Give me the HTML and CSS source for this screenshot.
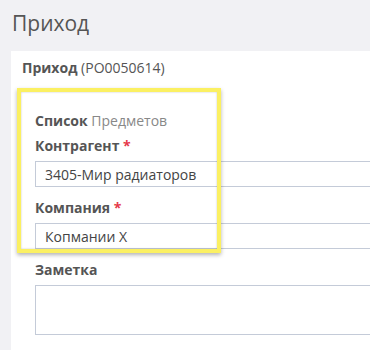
FILE: index.html
```html
<!DOCTYPE html>
<html lang="ru">
<head>
<meta charset="UTF-8" />
<meta name="viewport" content="width=device-width, initial-scale=1" />
<title>Приход</title>
<link rel="stylesheet" href="styles.css">
</head>
<body>
  <h1 class="page-title">Приход</h1>
  <div class="card">
    <div class="card-head"><b>Приход</b> (PO0050614)</div>
    <form class="form">
      <div class="section"><b>Список</b> <span>Предметов</span></div>
      <label for="partner">Контрагент <i>*</i></label>
      <input type="text" id="partner" value="3405-Мир радиаторов" />
      <label for="company">Компания <i>*</i></label>
      <input type="text" id="company" value="Копмании X" />
      <label for="note">Заметка</label>
      <textarea id="note"></textarea>
    </form>
    <div class="highlight"></div>
  </div>
</body>
</html>
```
FILE: styles.css
```css
html, body {
  height: 100%;
}
body {
  font-family: 'Open Sans', 'Noto Sans', sans-serif;
  background: #f1f1f4; color: #555;
  margin: 0; overflow: hidden;
  display: flex; flex-direction: column;
}
.page-title {
  font-size: 21px; font-weight: 400; line-height: 28px;
  margin: 0; padding: 9px 12px 14px;
}
.card {
  position: relative; flex: 1;
  background: white; margin-left: 11px;
  padding: 7px 11px 0;
  overflow: hidden;
  font-size: 14px; line-height: 20px;
}
.card-head b {
  font-weight: 700;
}
.form {
  display: flex; flex-direction: column; align-items: stretch;
  padding: 33px 0 0 13px; margin-right: -40px;
}
.section {
  margin-bottom: 5px;
}
.section b {
  font-weight: 700;
}
.section span {
  color: #888;
}
label {
  font-weight: 700; margin-bottom: 5px;
}
label i {
  font-style: normal; color: #e5394a;
}
input, textarea {
  box-sizing: border-box;
  border: 1px solid #c4cbd8; border-radius: 0;
  font-family: inherit; font-size: 14px; color: #444;
  background: white;
}
input {
  height: 26px; padding: 0 9px; margin-bottom: 11px;
}
textarea {
  height: 50px; padding: 4px 9px; resize: none;
  margin: 0;
}
.highlight {
  position: absolute; left: 6px; top: 37px;
  width: 204px; height: 165px; box-sizing: border-box;
  border: 4px solid #fbf062;
  box-shadow: 0 2px 4px rgba(0,0,0,0.3), inset 0 0 2px rgba(0,0,0,0.25);
}
```
